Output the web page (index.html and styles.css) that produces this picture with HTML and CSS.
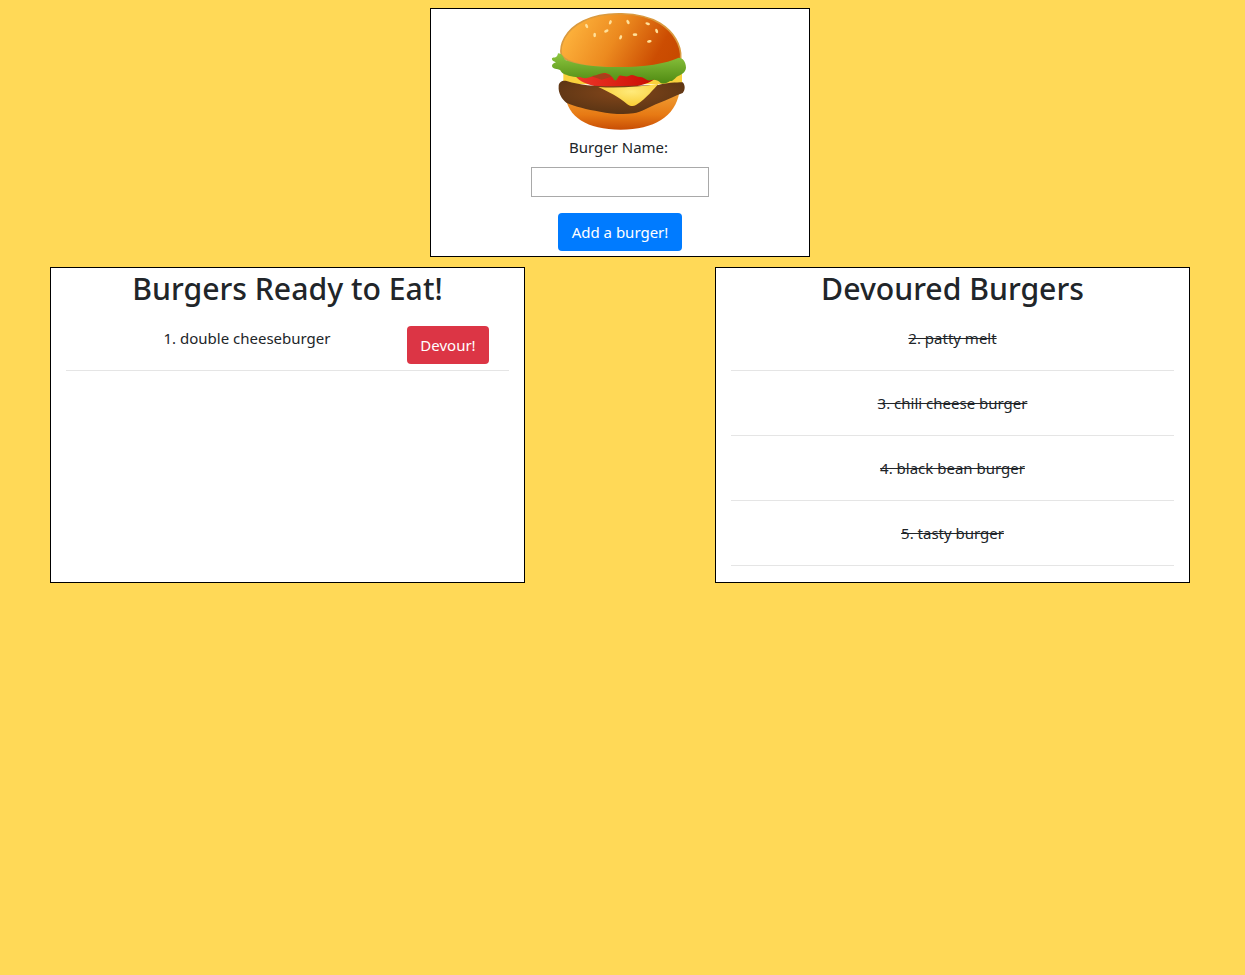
FILE: index.html
```html
<!DOCTYPE html>
<html lang="en">
<head>
<meta charset="utf-8">
<title>Burgers</title>
<link rel="stylesheet" href="styles.css">
</head>
<body>
<main class="page">
  <form class="add-card">
    <svg class="logo" viewBox="45 12 450 378" aria-hidden="true">
      <defs>
        <linearGradient id="bun" x1="0" y1="0.35" x2="1" y2="0.6">
          <stop offset="0" stop-color="#ffb63f"/>
          <stop offset="0.45" stop-color="#ec8a1f"/>
          <stop offset="0.85" stop-color="#cc4d02"/>
          <stop offset="1" stop-color="#c84a00"/>
        </linearGradient>
        <linearGradient id="base" x1="0" y1="0" x2="0" y2="1">
          <stop offset="0" stop-color="#f0a035"/>
          <stop offset="0.6" stop-color="#e77a14"/>
          <stop offset="1" stop-color="#c84e05"/>
        </linearGradient>
        <linearGradient id="leaf" x1="0" y1="0" x2="0" y2="1">
          <stop offset="0" stop-color="#8dc63f"/>
          <stop offset="1" stop-color="#4f8a12"/>
        </linearGradient>
        <linearGradient id="tomato" x1="0" y1="0" x2="1" y2="0">
          <stop offset="0" stop-color="#f0392b"/>
          <stop offset="1" stop-color="#c70a00"/>
        </linearGradient>
        <radialGradient id="patty" cx="0.5" cy="0.35" r="0.6">
          <stop offset="0" stop-color="#83461a"/>
          <stop offset="1" stop-color="#5c3514"/>
        </radialGradient>
        <radialGradient id="cheese" cx="0.55" cy="0.35" r="0.6">
          <stop offset="0" stop-color="#ffea7a"/>
          <stop offset="1" stop-color="#f9cf3a"/>
        </radialGradient>
      </defs>
      <path d="M106 270C112 335 170 374 272 374C372 374 436 335 448 262Z" fill="url(#base)"/>
      <path d="M100 200L456 200L456 238L100 238Z" fill="#f9d13c"/>
      <path d="M128 200L385 200C384 225 350 240 300 246C240 252 150 250 128 200Z" fill="url(#tomato)"/>
      <path d="M180 212C200 198 225 204 250 214L215 224Z" fill="#a8401a"/>
      <path d="M86 244C86 232 96 226 110 228C150 240 190 244 250 244L385 240C405 234 440 232 458 232C466 240 466 256 458 264C436 272 410 285 385 295C360 305 335 322 310 325C280 330 240 326 210 320C170 314 135 304 110 294C96 284 84 264 86 244Z" fill="url(#patty)"/>
      <path d="M205 246C260 250 330 246 386 236C370 252 350 280 318 300C308 306 298 302 290 296C270 278 235 260 205 246Z" fill="url(#cheese)"/>
      <path d="M94 150C88 120 105 75 160 48C220 18 330 18 390 55C430 80 455 120 452 160C440 178 360 190 270 190C190 190 110 178 94 150Z" fill="url(#bun)" stroke="#da9a3f" stroke-width="5"/>
      <path d="M84 145C96 145 98 155 106 165C140 180 210 188 270 186C340 186 410 176 446 158C458 158 468 170 468 188C466 202 456 208 446 212C438 214 430 230 420 228C412 234 402 238 392 234C384 226 372 222 362 226C352 230 340 214 330 216C318 216 308 206 298 212C288 218 278 210 268 212C262 216 260 232 252 224C246 212 234 204 222 204C212 204 200 212 190 212C176 220 160 222 150 216C140 218 128 214 116 212C106 208 98 208 92 198C90 190 70 196 66 184C66 176 74 174 78 172C72 170 64 166 66 160C72 156 82 160 84 145Z" fill="url(#leaf)"/>
      <g fill="#ffe09a">
        <ellipse cx="170" cy="63" rx="4" ry="7" transform="rotate(-25 170 63)"/>
        <ellipse cx="241" cy="52" rx="4" ry="7" transform="rotate(20 241 52)"/>
        <ellipse cx="294" cy="51" rx="4" ry="7" transform="rotate(-30 294 51)"/>
        <ellipse cx="353" cy="56" rx="7" ry="4" transform="rotate(15 353 56)"/>
        <ellipse cx="380" cy="78" rx="4" ry="7" transform="rotate(-20 380 78)"/>
        <ellipse cx="229" cy="78" rx="7" ry="4" transform="rotate(-25 229 78)"/>
        <ellipse cx="194" cy="90" rx="4" ry="7"/>
        <ellipse cx="272" cy="97" rx="4" ry="7" transform="rotate(20 272 97)"/>
        <ellipse cx="315" cy="89" rx="7" ry="4"/>
        <ellipse cx="358" cy="109" rx="7" ry="4" transform="rotate(-10 358 109)"/>
      </g>
    </svg>
    <label class="name-label" for="burger">Burger Name:</label>
    <input class="name-input" id="burger" type="text">
    <button class="btn btn-add" type="button">Add a burger!</button>
  </form>

  <section class="columns">
    <div class="card">
      <h2 class="card-title">Burgers Ready to Eat!</h2>
      <div class="ready-row">
        <span class="ready-name">1. double cheeseburger</span>
        <button class="btn btn-devour" type="button">Devour!</button>
      </div>
    </div>
    <div class="card">
      <h2 class="card-title">Devoured Burgers</h2>
      <p class="done-row"><span class="struck">2. patty melt</span></p>
      <p class="done-row"><span class="struck">3. chili cheese burger</span></p>
      <p class="done-row"><span class="struck">4. black bean burger</span></p>
      <p class="done-row"><span class="struck">5. tasty burger</span></p>
    </div>
  </section>
</main>
</body>
</html>
```
FILE: styles.css
```css
* {
  box-sizing: border-box;
}

html,
body {
  margin: 0;
  min-height: 975px;
  background: #ffd957;
}

body {
  font-family: "Noto Sans", "Open Sans", sans-serif;
  font-size: 15px;
  line-height: 24px;
  color: #212529;
}

.page {
  padding: 8px 55px 0 50px;
}

.add-card {
  width: 380px;
  margin: 0 auto 10px 380px;
  padding-bottom: 5px;
  display: flex;
  flex-direction: column;
  align-items: center;
  background: #fff;
  border: 1px solid #000;
}

.logo {
  display: block;
  width: 150px;
  height: 126px;
}

.name-label {
  padding-right: 3px;
  margin-bottom: 8px;
}

.name-input {
  display: block;
  width: 178px;
  height: 30px;
  margin-bottom: 16px;
  border: 1px solid #a9a9a9;
  background: #fff;
}

.btn {
  height: 38px;
  padding: 0;
  border: 1px solid transparent;
  border-radius: 4px;
  font: inherit;
  color: #fff;
}

.btn-add {
  width: 124px;
  background: #007bff;
}

.btn-devour {
  flex: none;
  width: 82px;
  background: #dc3545;
}

.columns {
  display: flex;
  justify-content: space-between;
  align-items: stretch;
}

.card {
  width: 475px;
  padding: 0 15px 16px;
  background: #fff;
  border: 1px solid #000;
}

.card-title {
  margin: 0;
  padding-top: 4px;
  font-size: 30.2px;
  font-weight: 500;
  line-height: 34px;
  text-align: center;
}

.ready-row {
  display: flex;
  align-items: flex-start;
  padding: 20px 20px 6px 21px;
  border-bottom: 1px solid #e5e5e5;
}

.ready-name {
  flex: 1;
  text-align: center;
}

.done-row {
  margin: 0;
  padding: 20px 0;
  text-align: center;
  border-bottom: 1px solid #e5e5e5;
}

.struck {
  text-decoration: line-through;
}
```
